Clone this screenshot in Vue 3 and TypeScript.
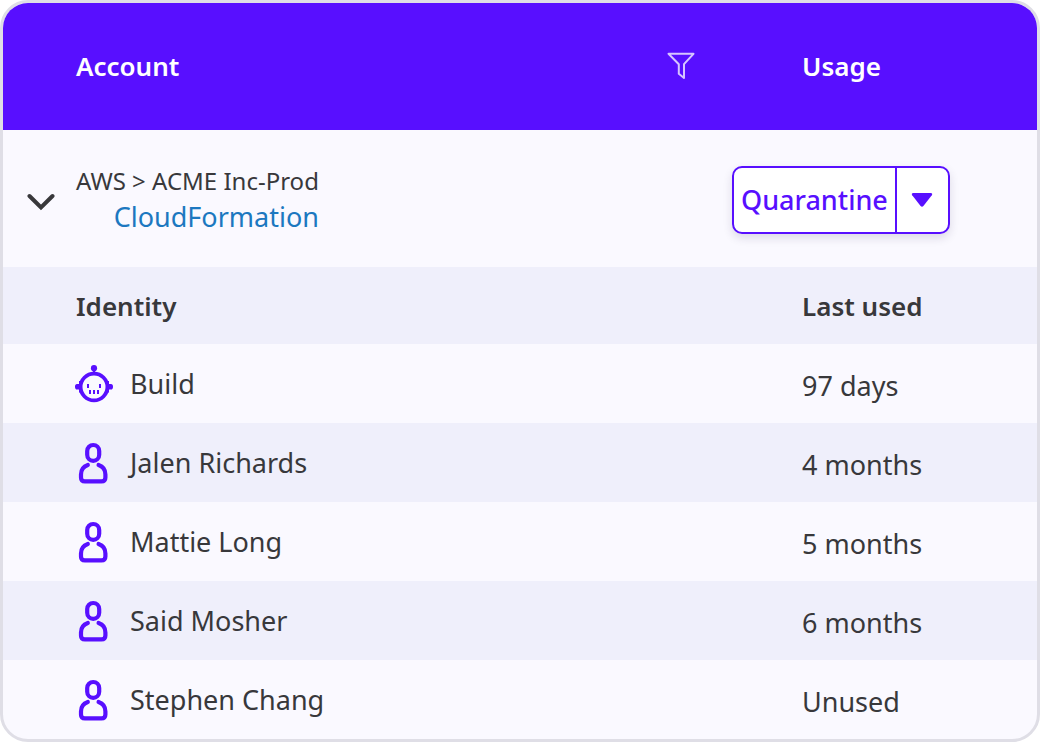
<script setup lang="ts">
interface Identity {
  name: string
  kind: 'bot' | 'person'
  lastUsed: string
}

const identities: Identity[] = [
  { name: 'Build', kind: 'bot', lastUsed: '97 days' },
  { name: 'Jalen Richards', kind: 'person', lastUsed: '4 months' },
  { name: 'Mattie Long', kind: 'person', lastUsed: '5 months' },
  { name: 'Said Mosher', kind: 'person', lastUsed: '6 months' },
  { name: 'Stephen Chang', kind: 'person', lastUsed: 'Unused' },
]
</script>

<template>
  <main class="card">
    <table class="table">
      <thead>
        <tr class="head">
          <th scope="col" class="main-col">
            <div class="head-cell">
              <span>Account</span>
              <button type="button" class="icon-button" aria-label="Filter accounts">
                <svg width="28" height="28" viewBox="0 0 28 28" fill="none" stroke="#d6c4ff" stroke-width="2" stroke-linejoin="round">
                  <path d="M1.5 1.8H26.5L17 12.2V26L11.8 21.8V12.2Z" />
                </svg>
              </button>
            </div>
          </th>
          <th scope="col" class="side-col">Usage</th>
        </tr>
      </thead>
      <tbody>
        <tr class="account">
          <td>
            <div class="account-cell">
              <button type="button" class="icon-button" aria-label="Collapse account" aria-expanded="true">
                <svg width="28" height="24" viewBox="0 0 28 24" fill="none" stroke="#38383b" stroke-width="4" stroke-linecap="round">
                  <path d="M2.5 9L14 20.5L25.5 9" />
                </svg>
              </button>
              <div class="account-text">
                <span class="path">AWS &gt; ACME Inc-Prod</span>
                <a href="#" class="stack">CloudFormation</a>
              </div>
            </div>
          </td>
          <td class="action">
            <div class="split">
              <button type="button" class="split-main">Quarantine</button>
              <button type="button" class="split-more" aria-label="More actions">
                <svg width="22" height="14" viewBox="0 0 22 14" fill="#580fff">
                  <path d="M2 0H20Q22 .4 20.8 2.2L12.4 13Q11 14.4 9.6 13L1.2 2.2Q0 .4 2 0Z" />
                </svg>
              </button>
            </div>
          </td>
        </tr>
        <tr class="subhead">
          <th scope="col" class="main-col">Identity</th>
          <th scope="col" class="side-col">Last used</th>
        </tr>
        <tr v-for="identity in identities" :key="identity.name" class="identity">
          <td class="main-col">
            <div class="identity-cell">
              <svg v-if="identity.kind === 'bot'" class="avatar" width="38" height="40" viewBox="1 0 38 40" fill="none" stroke="#580fff">
                <circle cx="19" cy="23" r="13.4" stroke-width="3.8" />
                <path d="M19 4V9" stroke-width="2.2" />
                <circle cx="19" cy="4.2" r="3.1" fill="#580fff" stroke="none" />
                <path
                  d="M7 17H4V20H2Q0 20 0 22.8T2 25.6H4V28.6H7ZM31 17H34V20H36Q38 20 38 22.8T36 25.6H34V28.6H31Z"
                  fill="#580fff"
                  stroke="none"
                />
                <path d="M13 20V24M25 20V24" stroke-width="2" />
                <path d="M15 26V30M19 26V30M23 26V30" stroke-width="2" />
              </svg>
              <svg v-else class="avatar" width="38" height="42" viewBox="1 0 38 42" fill="none" stroke="#580fff" stroke-width="4.2" stroke-linecap="round">
                <rect x="12.2" y="3" width="12" height="15.8" rx="6" />
                <path d="M12.8 23C8.5 24.5 6 28 6 32.4V35.4Q6 39.4 10 39.4H26.4Q30.4 39.4 30.4 35.4V32.4C30.4 28 27.9 24.5 23.6 23" />
              </svg>
              <span>{{ identity.name }}</span>
            </div>
          </td>
          <td class="side-col">{{ identity.lastUsed }}</td>
        </tr>
      </tbody>
    </table>
  </main>
</template>

<style>
body {
  margin: 0;
  background: #fff;
}
</style>

<style scoped>
.card {
  box-sizing: border-box;
  border: 3px solid #dfdee6;
  border-radius: 28px;
  overflow: hidden;
  background: #faf9ff;
  color: #38383b;
  font-family: "Noto Sans", "Open Sans", sans-serif;
  font-size: 27px;
  line-height: 36px;
}

.table {
  width: 100%;
  border-collapse: collapse;
}

th,
td {
  padding: 0;
  text-align: left;
  vertical-align: middle;
}

th {
  font-size: 26px;
  font-weight: 600;
}

.main-col {
  padding-left: 73px;
}

.side-col {
  width: 235px;
  padding-left: 70px;
}

.head {
  height: 127px;
  background: #580fff;
  color: #fff;
}

.head th {
  padding-bottom: 2px;
}

.head-cell {
  display: flex;
  align-items: center;
  justify-content: space-between;
  padding-right: 37px;
}

.icon-button {
  display: flex;
  padding: 0;
  border: 0;
  background: none;
  cursor: pointer;
}

.account {
  height: 137px;
}

.account-cell {
  display: flex;
  align-items: center;
  gap: 21px;
  padding-left: 24px;
}

.account-text {
  display: flex;
  flex-direction: column;
  align-items: flex-end;
}

.path {
  font-size: 24px;
}

.stack {
  color: #1c78c0;
  text-decoration: none;
}

.action {
  padding-top: 2px;
}

.split {
  display: inline-flex;
  border: 2px solid #580fff;
  border-radius: 10px;
  background: #fff;
  box-shadow: 0 4px 10px rgba(40, 30, 80, 0.14);
  vertical-align: middle;
}

.split button {
  height: 64px;
  border: 0;
  background: none;
  color: #580fff;
  font: inherit;
  font-weight: 500;
  cursor: pointer;
}

.split .split-main {
  padding: 0 7px;
}

.split .split-more {
  display: flex;
  align-items: center;
  justify-content: center;
  width: 53px;
  padding: 0;
  border-left: 2px solid #580fff;
}

.subhead {
  height: 77px;
}

.subhead,
.identity:nth-child(even) {
  background: #efeffb;
}

.identity {
  height: 79px;
}

.identity .side-col {
  padding-top: 4px;
}

.identity-cell {
  display: flex;
  align-items: center;
  gap: 16px;
}

.avatar {
  overflow: visible;
}
</style>
